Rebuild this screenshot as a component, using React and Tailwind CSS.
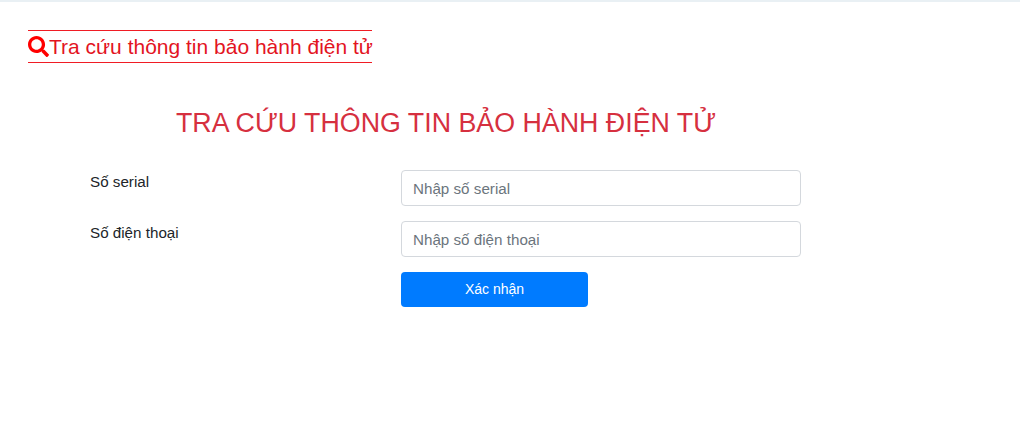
import { FaSearch } from "react-icons/fa";

function Field({ label, placeholder }) {
  return (
    <div className="flex mb-[15px]">
      <label className="w-[326px] pl-[15px] pt-[1px] text-[15.2px] leading-[21px] text-[#212529]">{label}</label>
      <input
        placeholder={placeholder}
        className="w-[400px] h-[36px] rounded-[4px] border border-[#d4d8dd] bg-white pl-[11px] pr-[12px] text-[15.2px] text-[#495057] placeholder:text-[#6c757d] outline-none"
      />
    </div>
  );
}

export default function App() {
  return (
    <div className="h-[448px] bg-white border-t-2 border-[#e9f0f4] font-['Liberation_Sans',Arial,sans-serif] overflow-hidden">
      <div className="pl-[28px] pt-[28px]">
        <div className="inline-flex items-center w-[344px] h-[33px] border-y border-[#f01c24] text-[#e3141f] text-[21px] whitespace-nowrap">
          <FaSearch size={21} className="text-[#f00] shrink-0" />
          <span>Tra cứu thông tin bảo hành điện tử</span>
        </div>
      </div>
      <h1 className="mt-[42px] ml-[176px] text-[26.8px] leading-[34px] text-[#d6303f] whitespace-nowrap">TRA CỨU THÔNG TIN BẢO HÀNH ĐIỆN TỬ</h1>
      <form className="mt-[30px] ml-[75px]">
        <Field label="Số serial" placeholder="Nhập số serial" />
        <Field label="Số điện thoại" placeholder="Nhập số điện thoại" />
        <div className="ml-[326px]">
          <button type="button" className="w-[187px] h-[35px] rounded-[4px] bg-[#007bff] text-white text-[14px]">Xác nhận</button>
        </div>
      </form>
    </div>
  );
}
